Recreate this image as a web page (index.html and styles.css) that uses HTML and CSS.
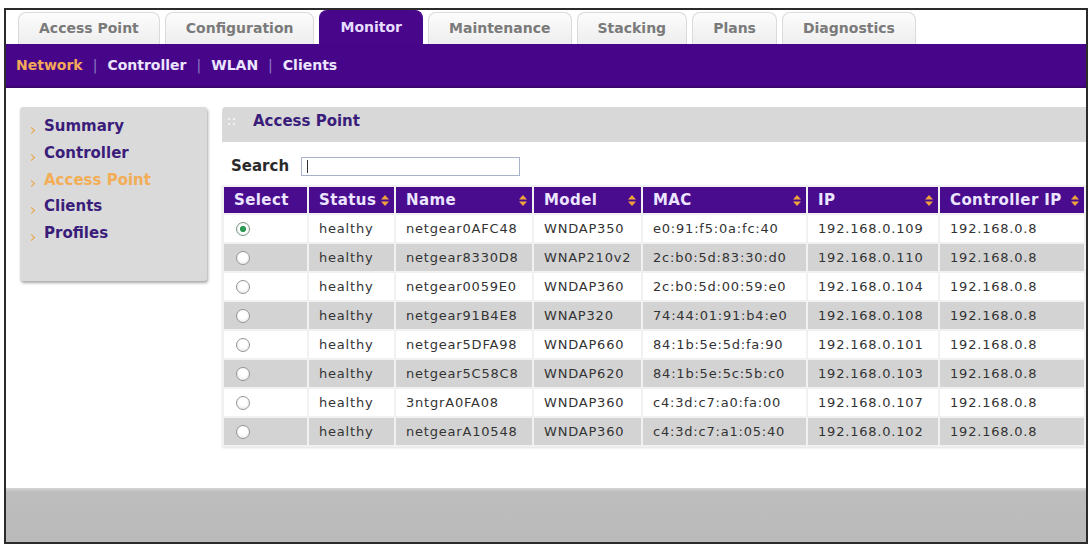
FILE: index.html
```html
<!DOCTYPE html>
<html>
<head>
<meta charset="utf-8">
<title>Monitor - Access Point</title>
<link rel="stylesheet" href="styles.css">
</head>
<body>
<div class="frame">
  <div class="tabs">
    <div class="tab">Access Point</div>
    <div class="tab">Configuration</div>
    <div class="tab active">Monitor</div>
    <div class="tab">Maintenance</div>
    <div class="tab">Stacking</div>
    <div class="tab">Plans</div>
    <div class="tab">Diagnostics</div>
  </div>
  <div class="subnav">
    <span class="sub current">Network</span><span class="sep">|</span>
    <span class="sub">Controller</span><span class="sep">|</span>
    <span class="sub">WLAN</span><span class="sep">|</span>
    <span class="sub">Clients</span>
  </div>
  <div class="content">
    <nav class="side">
      <div class="side-item"><span class="chev"></span>Summary</div>
      <div class="side-item"><span class="chev"></span>Controller</div>
      <div class="side-item current"><span class="chev"></span>Access Point</div>
      <div class="side-item"><span class="chev"></span>Clients</div>
      <div class="side-item"><span class="chev"></span>Profiles</div>
    </nav>
    <section class="panel">
      <div class="panel-head"><span class="grip"><i></i><i></i><i></i><i></i></span><span class="panel-title">Access Point</span></div>
      <div class="search-row">
        <span class="search-label">Search</span>
        <span class="search-input"><span class="caret"></span></span>
      </div>
      <table class="ap-table">
        <colgroup>
          <col class="c-select"><col class="c-status"><col class="c-name"><col class="c-model"><col class="c-mac"><col class="c-ip"><col>
        </colgroup>
        <thead>
          <tr>
            <th><div class="th-in">Select</div></th>
            <th><div class="th-in">Status<svg class="sort" viewBox="0 0 8 11"><path d="M4 0L8 4.6H0Z M4 11L8 6.4H0Z"/></svg></div></th>
            <th><div class="th-in">Name<svg class="sort" viewBox="0 0 8 11"><path d="M4 0L8 4.6H0Z M4 11L8 6.4H0Z"/></svg></div></th>
            <th><div class="th-in">Model<svg class="sort" viewBox="0 0 8 11"><path d="M4 0L8 4.6H0Z M4 11L8 6.4H0Z"/></svg></div></th>
            <th><div class="th-in">MAC<svg class="sort" viewBox="0 0 8 11"><path d="M4 0L8 4.6H0Z M4 11L8 6.4H0Z"/></svg></div></th>
            <th><div class="th-in">IP<svg class="sort" viewBox="0 0 8 11"><path d="M4 0L8 4.6H0Z M4 11L8 6.4H0Z"/></svg></div></th>
            <th><div class="th-in">Controller IP<svg class="sort" viewBox="0 0 8 11"><path d="M4 0L8 4.6H0Z M4 11L8 6.4H0Z"/></svg></div></th>
          </tr>
        </thead>
        <tbody>
          <tr><td><span class="radio checked"></span></td><td>healthy</td><td>netgear0AFC48</td><td>WNDAP350</td><td>e0:91:f5:0a:fc:40</td><td>192.168.0.109</td><td>192.168.0.8</td></tr>
          <tr class="alt"><td><span class="radio"></span></td><td>healthy</td><td>netgear8330D8</td><td>WNAP210v2</td><td>2c:b0:5d:83:30:d0</td><td>192.168.0.110</td><td>192.168.0.8</td></tr>
          <tr><td><span class="radio"></span></td><td>healthy</td><td>netgear0059E0</td><td>WNDAP360</td><td>2c:b0:5d:00:59:e0</td><td>192.168.0.104</td><td>192.168.0.8</td></tr>
          <tr class="alt"><td><span class="radio"></span></td><td>healthy</td><td>netgear91B4E8</td><td>WNAP320</td><td>74:44:01:91:b4:e0</td><td>192.168.0.108</td><td>192.168.0.8</td></tr>
          <tr><td><span class="radio"></span></td><td>healthy</td><td>netgear5DFA98</td><td>WNDAP660</td><td>84:1b:5e:5d:fa:90</td><td>192.168.0.101</td><td>192.168.0.8</td></tr>
          <tr class="alt"><td><span class="radio"></span></td><td>healthy</td><td>netgear5C58C8</td><td>WNDAP620</td><td>84:1b:5e:5c:5b:c0</td><td>192.168.0.103</td><td>192.168.0.8</td></tr>
          <tr><td><span class="radio"></span></td><td>healthy</td><td>3ntgrA0FA08</td><td>WNDAP360</td><td>c4:3d:c7:a0:fa:00</td><td>192.168.0.107</td><td>192.168.0.8</td></tr>
          <tr class="alt"><td><span class="radio"></span></td><td>healthy</td><td>netgearA10548</td><td>WNDAP360</td><td>c4:3d:c7:a1:05:40</td><td>192.168.0.102</td><td>192.168.0.8</td></tr>
        </tbody>
      </table>
    </section>
  </div>
  <div class="footer"></div>
</div>
</body>
</html>
```
FILE: styles.css
```css
html, body {
  margin: 0;
  background: #ffffff;
  font-family: "DejaVu Sans", Verdana, sans-serif;
}

.frame {
  margin: 8px 4px 0 4px;
  height: 536px;
  box-sizing: border-box;
  border: 2px solid #2b2b2b;
  display: flex;
  flex-direction: column;
  overflow: hidden;
}

/* top tabs */
.tabs {
  height: 34px;
  flex: none;
  display: flex;
  align-items: flex-end;
  gap: 5px;
  padding-left: 12px;
  box-sizing: border-box;
}
.tab {
  height: 32px;
  box-sizing: border-box;
  padding: 0 20px;
  border: 1px solid #dadada;
  border-bottom: none;
  border-radius: 8px 8px 0 0;
  background: linear-gradient(#fcfcfc, #eeeeee);
  color: #7a7a7a;
  font-size: 14px;
  font-weight: bold;
  line-height: 30px;
  white-space: nowrap;
}
.tab.active {
  height: 34px;
  line-height: 32px;
  background: #48078b;
  border-color: #48078b;
  color: #e6ddff;
}

/* sub navigation bar */
.subnav {
  height: 44px;
  flex: none;
  background: #47068a;
  border-bottom: 2px solid #3a0570;
  display: flex;
  align-items: center;
  padding: 0 0 0 10px;
  box-sizing: border-box;
  font-size: 14px;
  font-weight: bold;
  color: #ece5ff;
}
.sub.current { color: #f2a858; }
.sep {
  color: #8d78c4;
  font-weight: normal;
  margin: 0 10px;
}

/* content */
.content {
  flex: 1;
  display: flex;
  align-items: flex-start;
  gap: 15px;
  padding: 19px 0 0 14px;
  box-sizing: border-box;
}

.side {
  width: 187px;
  height: 174px;
  flex: none;
  box-sizing: border-box;
  background: #dadada;
  border-radius: 3px;
  box-shadow: 1px 2px 3px rgba(0, 0, 0, 0.35);
  padding: 6px 0 0 8px;
}
.side-item {
  display: flex;
  align-items: center;
  height: 26.7px;
  font-size: 15px;
  font-weight: bold;
  color: #3a1d7a;
}
.side-item.current { color: #f2ad55; }
.chev {
  width: 4px;
  height: 4px;
  border-right: 1.5px solid #eaa545;
  border-bottom: 1.5px solid #eaa545;
  transform: rotate(-45deg);
  margin: 8px 10px 0 1px;
  flex: none;
}

.panel {
  width: 864px;
  flex: none;
}
.panel-head {
  height: 35px;
  box-sizing: border-box;
  background: #d8d8d8;
  border-radius: 4px 0 0 0;
  display: flex;
  align-items: center;
  padding: 0 0 7px 6px;
}
.grip {
  display: grid;
  grid-template-columns: 2px 2px;
  gap: 3px;
  margin-right: 18px;
}
.grip i {
  width: 2px;
  height: 2px;
  background: #f2f2f2;
}
.panel-title {
  font-size: 15px;
  font-weight: bold;
  color: #3a1d7a;
}

.search-row {
  height: 43px;
  box-sizing: border-box;
  display: flex;
  align-items: center;
  padding: 5px 0 0 9px;
}
.search-label {
  font-size: 15px;
  font-weight: bold;
  color: #2a2a2a;
}
.search-input {
  width: 219px;
  height: 19px;
  box-sizing: border-box;
  border: 1px solid #a8b2c8;
  margin-left: 12px;
  display: flex;
  align-items: center;
  padding-left: 5px;
  background: #fff;
}
.caret {
  width: 1px;
  height: 13px;
  background: #333;
}

/* table */
.ap-table {
  width: 864px;
  table-layout: fixed;
  border-collapse: separate;
  border-spacing: 2px;
  background: #f1f1f1;
  box-shadow: 0 1px 2px rgba(0, 0, 0, 0.12);
}
.c-select { width: 83px; }
.c-status { width: 85px; }
.c-name { width: 136px; }
.c-model { width: 107px; }
.c-mac { width: 163px; }
.c-ip { width: 130px; }

.ap-table th {
  height: 26px;
  padding: 0 5px 0 10px;
  background: #4a0c8e;
  color: #ece5ff;
  font-size: 15px;
  font-weight: bold;
  letter-spacing: 0.4px;
  text-align: left;
  white-space: nowrap;
}
.th-in {
  display: flex;
  align-items: center;
  justify-content: space-between;
}
.sort {
  width: 8px;
  height: 11px;
  flex: none;
  fill: #f0a23e;
}

.ap-table td {
  height: 27px;
  padding: 0 0 0 10px;
  background: #ffffff;
  font-size: 13px;
  letter-spacing: 0.8px;
  color: #333333;
  white-space: nowrap;
}
.ap-table tr.alt td { background: #d3d3d3; }

.radio {
  display: block;
  width: 14px;
  height: 14px;
  box-sizing: border-box;
  margin-left: 2px;
  border-radius: 50%;
  border: 1.5px solid #959595;
  background: radial-gradient(circle at 50% 40%, #ffffff 40%, #e0e0e0 100%);
}
.radio.checked {
  border-color: #7c9482;
  background: radial-gradient(circle, #2f9a52 0 2.8px, #ffffff 3.4px, #e8eee9 100%);
}

.footer {
  height: 54px;
  flex: none;
  background: linear-gradient(#d4d4d4 0, #bdbdbd 4px, #bababa 100%);
}
```
